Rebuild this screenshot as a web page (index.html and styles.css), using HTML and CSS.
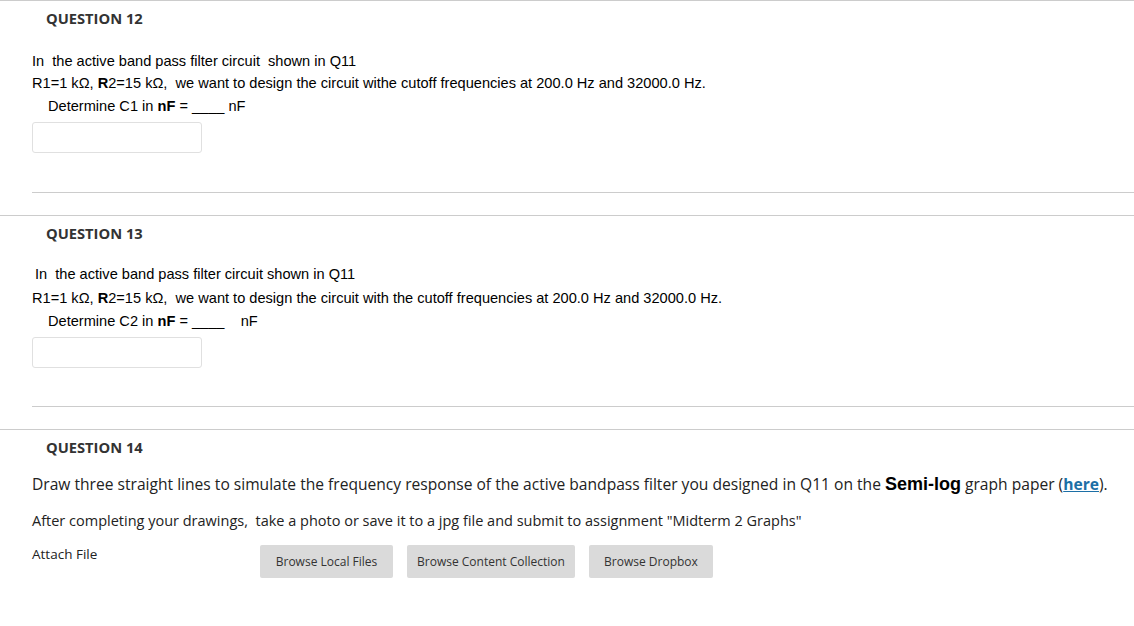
FILE: index.html
```html
<!DOCTYPE html>
<html>
<head>
<meta charset="utf-8">
<link rel="stylesheet" href="styles.css">
</head>
<body>
<div class="question">
  <h3 class="qtitle">QUESTION 12</h3>
  <div class="qbody">
    <div class="arial l1">In&nbsp; the active band pass filter circuit&nbsp; shown in Q11</div>
    <div class="arial l2">R1=1 kΩ, <b>R</b>2=15 kΩ,&nbsp; we want to design the circuit withe cutoff frequencies at 200.0 Hz and 32000.0 Hz.</div>
    <div class="arial l3 indent">Determine C1 in <b>nF</b> = ____ nF</div>
    <div class="answer"></div>
  </div>
</div>
<div class="question">
  <h3 class="qtitle">QUESTION 13</h3>
  <div class="qbody qb13">
    <div class="arial l1 shift">In&nbsp; the active band pass filter circuit shown in Q11</div>
    <div class="arial l2b">R1=1 kΩ, <b>R</b>2=15 kΩ,&nbsp; we want to design the circuit with the cutoff frequencies at 200.0 Hz and 32000.0 Hz.</div>
    <div class="arial l3b indent">Determine C2 in <b>nF</b> = ____&nbsp;&nbsp;&nbsp; nF</div>
    <div class="answer"></div>
  </div>
</div>
<div class="question last">
  <h3 class="qtitle">QUESTION 14</h3>
  <div class="q14">
    <p class="para big">Draw three straight lines to simulate the frequency response of the active bandpass filter you designed in Q11 on the <b class="strong">Semi-log</b> graph paper (<a class="link" href="#">here</a>).</p>
    <p class="para p2">After completing your drawings,&nbsp; take a photo or save it to a jpg file and submit to assignment "Midterm 2 Graphs"</p>
    <div class="attach">
      <span class="attach-label">Attach File</span>
      <div class="buttons">
        <span class="btn b1">Browse Local Files</span>
        <span class="btn b2">Browse Content Collection</span>
        <span class="btn b3">Browse Dropbox</span>
      </div>
    </div>
  </div>
</div>
</body>
</html>
```
FILE: styles.css
```css
html, body {
  margin: 0;
  padding: 0;
  background: #fff;
}
body {
  width: 1134px;
  font-family: "Open Sans", "Liberation Sans", sans-serif;
  color: #222;
}
.question {
  border-top: 1px solid #cccccc;
  padding: 0 0 22px 0;
}
.question.last {
  padding-bottom: 0;
}
.qtitle {
  margin: 0;
  padding: 7px 0 0 46px;
  font-size: 14.7px;
  line-height: 20px;
  font-weight: 700;
  color: #333;
}
.qbody {
  margin-left: 32px;
  padding-top: 22px;
  padding-bottom: 39px;
  border-bottom: 1px solid #cccccc;
}
.qb13 {
  padding-top: 20px;
  padding-bottom: 38px;
}
.arial {
  font-family: "Liberation Sans", Arial, sans-serif;
  font-size: 14.6px;
  color: #000;
  line-height: 22px;
  white-space: nowrap;
}
.arial b {
  font-weight: 700;
}
.l2 { margin-top: 0; }
.l3 { margin-top: 1px; }
.l2b { margin-top: 2px; }
.l3b { margin-top: 1px; }
.indent { padding-left: 16px; }
.shift { padding-left: 3px; }
.answer {
  margin-top: 5px;
  width: 168px;
  height: 29px;
  border: 1px solid #e0e0e0;
  border-radius: 3px;
  background: #fff;
}
.q14 {
  margin-left: 32px;
  padding-top: 16px;
}
.para {
  margin: 0;
  font-size: 14.5px;
  line-height: 22px;
  color: #222;
  white-space: nowrap;
}
.para.big {
  font-size: 15.6px;
}
.p2 {
  margin-top: 15px;
}
.strong {
  font-family: "Liberation Sans", Arial, sans-serif;
  font-weight: 700;
  font-size: 18px;
  color: #000;
}
.link {
  color: #1c6fa6;
  font-weight: 700;
  text-decoration: underline;
}
.attach {
  display: flex;
  margin-top: 12px;
}
.attach-label {
  width: 228px;
  font-size: 13.5px;
  line-height: 20px;
  color: #222;
}
.buttons {
  display: flex;
  gap: 14px;
  padding-top: 1px;
}
.btn {
  display: inline-flex;
  align-items: center;
  justify-content: center;
  height: 33px;
  background: #dadada;
  border-radius: 2px;
  font-size: 12px;
  color: #333;
  white-space: nowrap;
}
.b1 { width: 133px; }
.b2 { width: 168px; }
.b3 { width: 124px; }
```
